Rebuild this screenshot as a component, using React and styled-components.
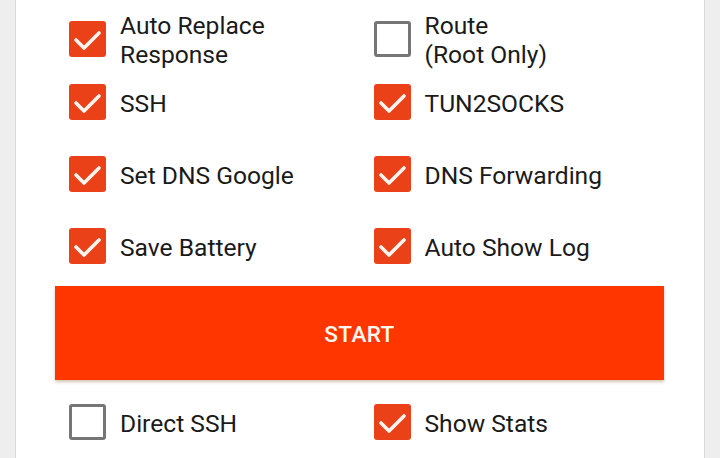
import React from "react";
import styled, { createGlobalStyle } from "styled-components";

const Global = createGlobalStyle`
  html, body { margin: 0; padding: 0; background: #eeeeee; }
  body { font-family: Roboto, "Liberation Sans", sans-serif; }
`;

const Page = styled.div`
  display: flex;
  justify-content: flex-start;
  height: 458px;
  overflow: hidden;
  padding-left: 16px;
`;

const Card = styled.div`
  width: 688px;
  background: #ffffff;
  box-shadow: -1px 0 0 #d9d9d9, 1px 0 0 #d9d9d9;
  padding: 11px 40px 0 39px;
  box-sizing: border-box;
  display: flex;
  flex-direction: column;
`;

const Grid = styled.div`
  display: grid;
  grid-template-columns: 1fr 1fr;
`;

const Cell = styled.label`
  display: flex;
  align-items: center;
  gap: 14px;
  padding-left: 14px;
  height: ${(p) => p.$h}px;
  color: #1a1a1a;
  font-size: 24.6px;
  line-height: 29px;
`;

const Box = styled.span`
  flex: none;
  width: 37px;
  height: 36px;
  box-sizing: border-box;
  border-radius: 3px;
  background: ${(p) => (p.$on ? "#ea4119" : "#ffffff")};
  border: ${(p) => (p.$on ? "none" : "3.5px solid #767676")};
  display: flex;
  align-items: center;
  justify-content: center;
`;

const Label = styled.span`
  display: block;
  padding-top: 3px;
`;

const StartButton = styled.button`
  margin-top: 4px;
  height: 95px;
  width: 100%;
  border: none;
  background: #ff3600;
  color: #fff8f0;
  font-family: Roboto, "Liberation Sans", sans-serif;
  font-weight: 500;
  font-size: 22.5px;
  letter-spacing: 0.4px;
  box-shadow: 0 2px 3px rgba(120, 60, 0, 0.3);
  display: flex;
  align-items: center;
  justify-content: center;
  padding: 2px 0 0;
`;

const BottomGrid = styled(Grid)`
  margin-top: 6px;
`;

function Check({ on }) {
  return (
    <Box $on={on}>
      {on && (
        <svg width="37" height="36" viewBox="0 0 37 36">
          <polyline
            points="7,19 15,27 30,12"
            fill="none"
            stroke="#fff4ee"
            strokeWidth="3.6"
            strokeLinecap="round"
            strokeLinejoin="round"
          />
        </svg>
      )}
    </Box>
  );
}

function Option({ on, h = 72, children }) {
  return (
    <Cell $h={h}>
      <Check on={on} />
      <Label>{children}</Label>
    </Cell>
  );
}

export default function App() {
  return (
    <>
      <Global />
      <Page>
        <Card>
          <Grid>
            <Option on h={55}>
              Auto Replace
              <br />
              Response
            </Option>
            <Option on={false} h={55}>
              Route
              <br />
              (Root Only)
            </Option>
            <Option on>SSH</Option>
            <Option on>TUN2SOCKS</Option>
            <Option on>Set DNS Google</Option>
            <Option on>DNS Forwarding</Option>
            <Option on>Save Battery</Option>
            <Option on>Auto Show Log</Option>
          </Grid>
          <StartButton>START</StartButton>
          <BottomGrid>
            <Option on={false}>Direct SSH</Option>
            <Option on>Show Stats</Option>
          </BottomGrid>
        </Card>
      </Page>
    </>
  );
}
